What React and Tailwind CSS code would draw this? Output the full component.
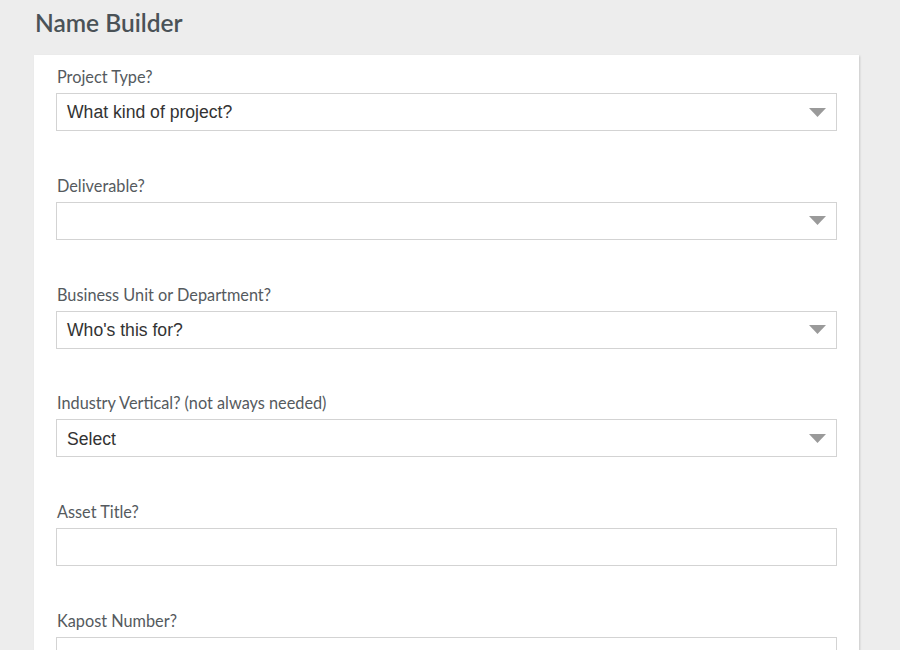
const fields = [
  { label: 'Project Type?', type: 'select', value: 'What kind of project?' },
  { label: 'Deliverable?', type: 'select', value: '' },
  { label: 'Business Unit or Department?', type: 'select', value: "Who's this for?" },
  { label: 'Industry Vertical? (not always needed)', type: 'select', value: 'Select' },
  { label: 'Asset Title?', type: 'text', value: '' },
  { label: 'Kapost Number?', type: 'text', value: '' },
];

const Field = ({ label, type, value }) => (
  <div className="flex flex-col">
    <label className="h-6 pl-px text-[16.3px] leading-6 text-[#555a5e]">{label}</label>
    <div className="mt-[4px] flex h-[38px] items-center justify-between border border-[#d3d3d3] bg-white pl-[10px] pr-[10px]">
      <span className="pt-px text-[17.6px] text-[#333] font-['Liberation_Sans',Arial,sans-serif]">{value}</span>
      {type === 'select' && (
        <svg width="17" height="9" viewBox="0 0 17 9" className="shrink-0">
          <polygon points="0,0 17,0 8.5,9" fill="#9a9a9a" />
        </svg>
      )}
    </div>
  </div>
);

export default function App() {
  return (
    <div className="min-h-[650px] bg-[#ededed] font-['Lato','Noto_Sans',sans-serif]">
      <div className="px-[35px] pt-[8px]">
        <h1 className="text-[24.5px] font-semibold leading-[30px] text-[#4a5257]">Name Builder</h1>
      </div>
      <div className="ml-[34px] mr-[41px] mt-[17px] bg-white px-[22px] pt-[10px] pb-10 shadow-[1px_1px_2px_rgba(0,0,0,0.15)]">
        <div className="flex flex-col gap-[42.8px]">
          {fields.map((f) => (
            <Field key={f.label} {...f} />
          ))}
        </div>
      </div>
    </div>
  );
}
